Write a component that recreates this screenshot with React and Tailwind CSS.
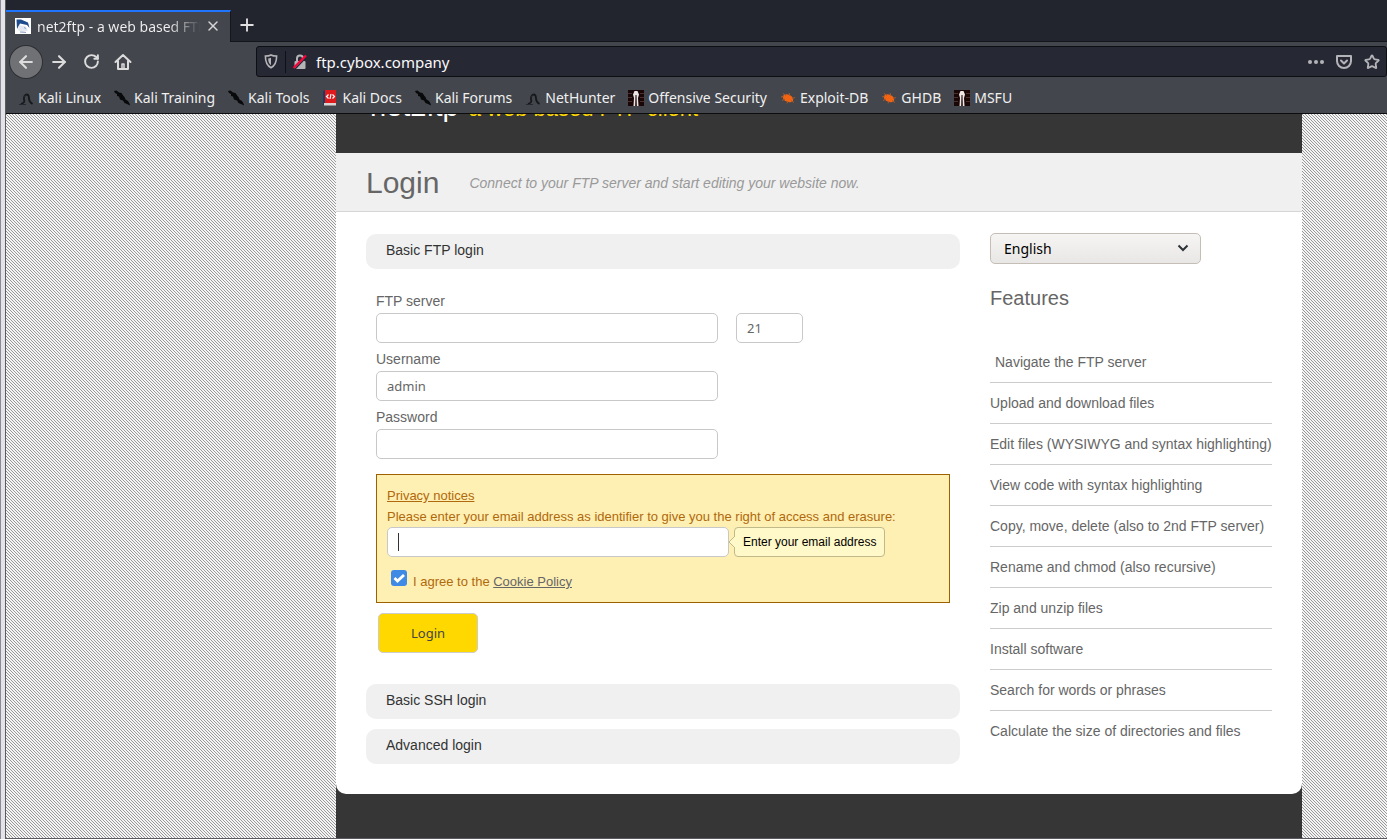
import React from "react";
import { ArrowLeft, ArrowRight, RotateCw, Plus, X, Star } from "lucide-react";

const favicons = {
  dragon: (
    <svg viewBox="0 0 16 16" className="size-4 shrink-0">
      <path d="M3 14C6 13 7 11.500 6 9.500 5.500 6.500 7 4.500 9 4.500 11 4.800 11 6.500 11 8.500c0 2.500 1 4 3.500 5.500" fill="none" stroke="#16181b" strokeWidth="1.800" />
      <path d="M1 14.500h7M5.500 7l3-2" stroke="#26282c" strokeWidth="1" />
    </svg>
  ),
  kali: (
    <svg viewBox="0 0 16 16" className="size-4 shrink-0">
      <path d="M0 1 2.500.5 5 2.500 7.500 3 9.500 6 10.500 7 11.500 9.500 14 11 15.500 13.500 16 15.500 13 14 10.500 13 9 10.500 6 9.500 5 6.500 3 6 3 4 1 3Z" fill="#08090a" />
    </svg>
  ),
  docs: (
    <svg viewBox="0 0 16 16" className="size-4 shrink-0">
      <path d="M1 1.500 3 0v14l-2 1.500z" fill="#183a68" />
      <path d="M3 0h11v13H3z" fill="#df1a1d" />
      <path d="M2 13h12v2.500H2z" fill="#d9d3d3" />
      <path d="m6.500 4.500-2 2 2 2M10.500 4.500l2 2-2 2M9 4 8 9" fill="none" stroke="#fff" strokeWidth="1.200" />
    </svg>
  ),
  offsec: (
    <svg viewBox="0 0 16 16" className="size-4 shrink-0">
      <path d="M0 0h16v16H0z" fill="#190707" />
      <path d="M0 3.500h4M0 7.500h4M0 11.500h4M12 3.500h4M12 7.500h4M12 11.500h4" stroke="#4d2f2e" strokeWidth="1.200" />
      <path d="M5.500 16 6 8 5 4.500 6.500 1h3L11 4.500 10 8l.5 8H8.800L8.500 5h-1L7.200 16z" fill="#eee7e5" />
    </svg>
  ),
  bug: (
    <svg viewBox="0 0 16 16" className="size-4 shrink-0">
      <ellipse cx="8" cy="8.300" rx="5.500" ry="3.600" transform="rotate(24 8 8.300)" fill="#f26411" />
      <path d="M1 7 4 6M2 10.500 5 9M3 3.500 6 5.500M9 3l1 3M15 7.500l-3 1M14 12.500l-3-2M7 13.500 8 11" stroke="#a5592e" strokeWidth="1" />
    </svg>
  ),
};

const bookmarks = [
  ["Kali Linux", "dragon"],
  ["Kali Training", "kali"],
  ["Kali Tools", "kali"],
  ["Kali Docs", "docs"],
  ["Kali Forums", "kali"],
  ["NetHunter", "dragon"],
  ["Offensive Security", "offsec"],
  ["Exploit-DB", "bug"],
  ["GHDB", "bug"],
  ["MSFU", "offsec"],
];

const features = [
  "Upload and download files",
  "Edit files (WYSIWYG and syntax highlighting)",
  "View code with syntax highlighting",
  "Copy, move, delete (also to 2nd FTP server)",
  "Rename and chmod (also recursive)",
  "Zip and unzip files",
  "Install software",
  "Search for words or phrases",
  "Calculate the size of directories and files",
];

const field =
  "block h-[30px] rounded-[5px] border border-[#c8c8c8] bg-white px-2.5 font-['Noto_Sans',sans-serif] text-[13px] text-[#666] outline-none";

function Tabs() {
  return (
    <div className="flex h-[42px] items-end border-b border-[#15161b] bg-[#23252e]">
      <div className="-mb-px flex h-8 w-[225px] items-center border-t-2 border-r border-t-[#1f75fe] border-r-[#15161b] bg-[#43464c] px-[9px] pb-0.5">
        <svg viewBox="0 0 16 16" className="size-4 shrink-0">
          <path d="M0 0h16v16H0z" fill="#fff" />
          <path d="M1.500 1.500H6l7 3L14.500 10 12 7 5 5.500 2 11z" fill="#1d4b8c" />
          <path d="m4 7 7 1.500 2 4-6 2-4-2.500z" fill="#e3e8f1" />
          <path d="M5 14l6 .5M9 9.500l2 1" stroke="#8fa4c4" />
        </svg>
        <span className="ml-1.5 w-0 flex-1 overflow-hidden bg-linear-to-r from-[#f0f0f1] from-80% to-transparent bg-clip-text text-[14px] whitespace-nowrap text-transparent">
          net2ftp - a web based FTP client
        </span>
        <button aria-label="Close tab" className="ml-1 text-[#d4d4d6]">
          <X size={16} strokeWidth={2.25} />
        </button>
      </div>
      <button aria-label="New tab" className="mb-1.5 ml-1.5 text-[#e0e0e2]">
        <Plus size={20} strokeWidth={2.25} />
      </button>
    </div>
  );
}

function Toolbar() {
  return (
    <div className="flex h-[39px] items-center bg-[#43464c] text-[#dcdcdd]">
      <div className="flex w-[250px] items-center pl-1">
        <button aria-label="Back" className="flex size-8 items-center justify-center rounded-full bg-[#707175] ring-1 ring-[#2d2f33]">
          <ArrowLeft size={20} strokeWidth={2.5} />
        </button>
        <button aria-label="Forward" className="ml-[7px]">
          <ArrowRight size={20} strokeWidth={2.5} />
        </button>
        <button aria-label="Reload" className="ml-3.5">
          <RotateCw size={17} strokeWidth={2.75} />
        </button>
        <button aria-label="Home" className="ml-3.5">
          <svg viewBox="0 0 18 18" className="size-[18px]" fill="none" stroke="currentColor" strokeWidth="2" strokeLinecap="round" strokeLinejoin="round">
            <path d="m1.500 9 7.500-7 7.500 7M4 8v8h10V8" />
            <path d="M8 16v-5h2v5" strokeWidth="1.500" />
          </svg>
        </button>
      </div>
      <div className="flex h-[31px] flex-1 items-center rounded-[3px] border border-[#0e0f13] bg-[#262834] pr-1.5 text-[#b4b4b8]">
        <svg viewBox="0 0 14 16" className="ml-[7px] h-[15px] w-3.5" fill="none" stroke="currentColor" strokeWidth="1.700">
          <path d="M7 1c2 1 4 1.200 6 1.200 0 6-1 10-6 12.500C2 12.200 1 8.200 1 2.200 3 2.200 5 2 7 1Z" />
          <path d="M7 4v8c-2.500-2-3-4-3-7.200C5 4.800 6 4.500 7 4Z" fill="currentColor" stroke="none" />
        </svg>
        <span className="ml-[7px] h-[22px] w-px bg-[#101118]" />
        <svg viewBox="0 0 16 16" className="ml-1.5 size-4" fill="none">
          <path d="M5 7V4.500a3 3 0 0 1 6 0V7" stroke="#b4b4b8" strokeWidth="2" />
          <rect x="2.500" y="7" width="11" height="8" rx="1" fill="#b4b4b8" />
          <path d="M2.500 15.500 15 2.500" stroke="#262834" strokeWidth="1.500" />
          <path d="M1.500 14 14 1.500" stroke="#ff0039" strokeWidth="2.200" />
        </svg>
        <input aria-label="Address" defaultValue="ftp.cybox.company" className="ml-2 w-0 flex-1 bg-transparent pt-0.5 text-[15px] text-[#f9f9fa] outline-none" />
        <button aria-label="Page actions">
          <svg viewBox="0 0 16 16" className="size-4" fill="currentColor">
            <circle cx="2" cy="8" r="2" />
            <circle cx="8" cy="8" r="2" />
            <circle cx="14" cy="8" r="2" />
          </svg>
        </button>
        <button aria-label="Save to Pocket" className="ml-3">
          <svg viewBox="0 0 16 16" className="size-4" fill="none" stroke="currentColor" strokeWidth="2" strokeLinecap="round" strokeLinejoin="round">
            <path d="M1 2h14v5a7 7 0 0 1-14 0z" />
            <path d="m5 6.500 3 3 3-3" />
          </svg>
        </button>
        <button aria-label="Bookmark this page" className="ml-3">
          <Star size={16} strokeWidth={2.75} />
        </button>
      </div>
    </div>
  );
}

function Bookmarks() {
  return (
    <nav className="flex h-[33px] items-center gap-[13px] border-b border-[#0c0c0d] bg-[#43464c] pl-3 text-[14px] leading-5 whitespace-nowrap text-[#f0f0f1]">
      {bookmarks.map(([label, icon]) => (
        <a key={label} href="#" className="flex items-center gap-1 pt-0.5">
          {favicons[icon]}
          {label}
        </a>
      ))}
    </nav>
  );
}

function LoginForm() {
  return (
    <form className="px-2.5 pt-5">
      <div className="flex gap-[18px]">
        <div>
          <label htmlFor="server" className="block h-6 leading-6">FTP server</label>
          <input id="server" className={`${field} w-[342px]`} />
        </div>
        <input aria-label="Port" defaultValue="21" className={`${field} mt-6 w-[67px]`} />
      </div>
      <label htmlFor="user" className="mt-1 block h-6 leading-6">Username</label>
      <input id="user" defaultValue="admin" className={`${field} w-[342px]`} />
      <label htmlFor="pass" className="mt-1 block h-6 leading-6">Password</label>
      <input id="pass" type="password" className={`${field} w-[342px]`} />

      <div className="mt-[15px] h-[129px] border border-[#9f6000] bg-[#feefb3] px-2.5 pt-2.5 text-[13px] leading-[21px] text-[#b0690c]">
        <a href="#" className="block underline">Privacy notices</a>
        <label htmlFor="email" className="block">
          Please enter your email address as identifier to give you the right of access and erasure:
        </label>
        <div className="flex">
          <div className="relative">
            <input id="email" className={`${field} w-[342px]`} />
            <span className="absolute top-1.5 left-[11px] h-[18px] w-px bg-[#333]" />
          </div>
          <div className="relative ml-[5px] flex h-[30px] items-center rounded border border-[#c0b98a] bg-[#fff8c8] px-2 text-[12px] text-black">
            <svg viewBox="0 0 6 12" className="absolute -left-1.5 h-3 w-1.5">
              <path d="M6 0 0 6l6 6" fill="#fff8c8" stroke="#c0b98a" />
            </svg>
            Enter your email address
          </div>
        </div>
        <div className="mt-3 flex items-center gap-1.5 pl-1">
          <span className="relative mb-1.5 size-4">
            <input id="agree" type="checkbox" defaultChecked className="block size-4 appearance-none rounded-[3px] bg-[#3e8ae5]" />
            <svg viewBox="0 0 16 16" className="pointer-events-none absolute inset-0">
              <path d="m3.500 8 3 3 6.500-6" fill="none" stroke="#fff" strokeWidth="2.800" />
            </svg>
          </span>
          <span className="pt-0.5">
            <label htmlFor="agree">I agree to the </label>
            <a href="#" className="text-[#666] underline">Cookie Policy</a>
          </span>
        </div>
      </div>
      <button type="button" className="mt-2.5 ml-0.5 block h-10 w-[100px] rounded-[5px] border border-[#ccc] bg-[#ffd800] pt-0.5 font-['Noto_Sans',sans-serif] text-[13px] text-[#444]">
        Login
      </button>
    </form>
  );
}

const bar = "block h-[35px] w-full rounded-[10px] bg-[#f0f0f0] px-5 pb-0.5 text-left text-[#333]";

export default function App() {
  return (
    <div className="flex h-screen overflow-hidden bg-[#e4e4e8] font-['Noto_Sans',sans-serif]">
      <div className="w-1.5 shrink-0 border-r border-l border-r-[#5b5b5f] border-l-[#8b8a96]" />
      <div className="flex min-w-0 flex-1 flex-col border-b border-[#5b5b5f]">
        <Tabs />
        <Toolbar />
        <Bookmarks />
        <div className="min-h-0 flex-1 overflow-hidden bg-[#f4f4f4] bg-[conic-gradient(at_1px_1px,transparent_75%,#999_0),conic-gradient(at_1px_1px,transparent_75%,#999_0),conic-gradient(at_1px_1px,transparent_75%,#999_0)] bg-size-[3px_3px] bg-position-[0_0,1px_1px,2px_2px] font-['Liberation_Sans',sans-serif] text-[14px] text-[#666]">
          <div className="mr-[85px] ml-[330px] min-h-full bg-[#363636]">
            <header className="flex h-[39px] items-end overflow-hidden px-[34px] pb-8 whitespace-nowrap">
              <div className="flex items-baseline gap-2.5">
                <h1 className="text-[29px] leading-none text-white">net2ftp</h1>
                <p className="text-[22px] leading-none text-[#ffd800]">a web based FTP client</p>
              </div>
            </header>
            <div className="flex h-[59px] items-center gap-[30px] border-b border-[#d5d5d5] bg-[#f0f0f0] px-[30px] pt-0.5">
              <h2 className="text-[30px] leading-8">Login</h2>
              <p className="text-[14px] text-[#999] italic">Connect to your FTP server and start editing your website now.</p>
            </div>
            <main className="flex gap-[30px] rounded-b-[10px] bg-white px-[30px] pt-[21px] pb-[30px]">
              <section className="min-w-0 flex-1 pt-px">
                <button className={bar}>Basic FTP login</button>
                <LoginForm />
                <button className={`${bar} mt-[31px]`}>Basic SSH login</button>
                <button className={`${bar} mt-2.5`}>Advanced login</button>
              </section>
              <aside className="w-[282px] shrink-0">
                <div className="relative w-[211px]">
                  <select aria-label="Language" className="block h-[31px] w-full appearance-none rounded-[5px] border border-[#c4beb7] bg-linear-to-b from-[#f6f5f4] to-[#e9e7e6] px-[13px] font-['Noto_Sans',sans-serif] text-[14px] text-black">
                    <option>English</option>
                  </select>
                  <svg viewBox="0 0 12 8" className="pointer-events-none absolute top-[11px] right-3 h-2 w-3">
                    <path d="m1.500 1.500 4.500 4.500 4.500-4.500" fill="none" stroke="#2e3436" strokeWidth="2" />
                  </svg>
                </div>
                <h3 className="mt-[22px] text-[20px] leading-6">Features</h3>
                <ul className="mt-8 divide-y divide-[#ccc] whitespace-nowrap">
                  <li className="flex h-[41px] items-center pl-[5px]">Navigate the FTP server</li>
                  {features.map((f) => (
                    <li key={f} className="flex h-[41px] items-center">{f}</li>
                  ))}
                </ul>
              </aside>
            </main>
          </div>
        </div>
      </div>
    </div>
  );
}
